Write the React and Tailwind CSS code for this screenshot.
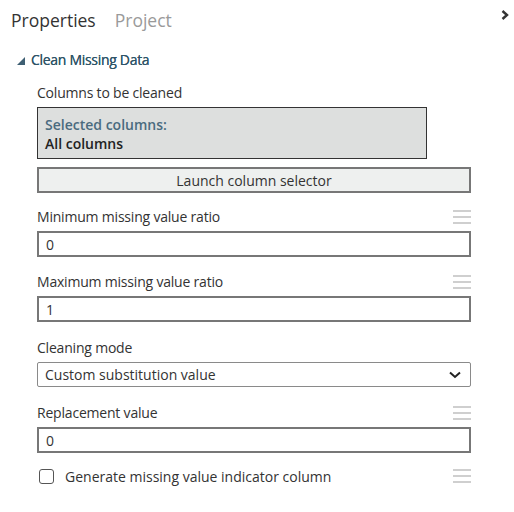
function Grip() {
  return (
    <svg viewBox="0 0 18 14" className="h-[14px] w-[18px]" aria-hidden="true">
      <rect x="0" y="0" width="18" height="2" fill="#cfcfcf" />
      <rect x="0" y="6" width="18" height="2" fill="#cfcfcf" />
      <rect x="0" y="12" width="18" height="2" fill="#cfcfcf" />
    </svg>
  )
}

function FieldLabel({ children, grip = true }) {
  return (
    <div className="flex h-[20px] items-center justify-between">
      <span className="text-[14px] leading-[20px] tracking-[-0.2px] text-[#333]">{children}</span>
      {grip && <Grip />}
    </div>
  )
}

function TextInput({ value }) {
  return (
    <div className="mt-[4px] flex h-[26px] items-center border-2 border-[#777] bg-white px-[7px] text-[14px] text-[#333]">
      {value}
    </div>
  )
}

export default function App() {
  return (
    <div
      className="h-[512px] w-[514px] bg-white text-[#333]"
      style={{ fontFamily: '"Open Sans", "Noto Sans", sans-serif' }}
    >
      <header className="flex h-[40px] items-center justify-between pl-[11px] pr-[5px]">
        <div className="flex items-center gap-[19px] text-[17.5px] leading-[40px]">
          <span className="text-[#333]">Properties</span>
          <span className="text-[#9a9a9a]">Project</span>
        </div>
        <svg viewBox="0 0 8 10" className="mb-[10px] h-[10px] w-[8px]" aria-hidden="true">
          <path d="M1.5 1 L6 5 L1.5 9" fill="none" stroke="#333" strokeWidth="2.4" />
        </svg>
      </header>

      <div className="mt-[10px] flex h-[20px] items-center gap-[6px] pl-[17px]">
        <svg viewBox="0 0 8 8" className="mt-[1px] h-[8px] w-[8px]" aria-hidden="true">
          <path d="M8 0 L8 8 L0 8 Z" fill="#3e5f73" />
        </svg>
        <span className="text-[14px] leading-[20px] tracking-[-0.3px] text-[#2f5468] [text-shadow:0_0_0.4px_#2f5468]">
          Clean Missing Data
        </span>
      </div>

      <div className="ml-[37px] w-[434px]">
        <div className="mt-[13px]">
          <FieldLabel grip={false}>Columns to be cleaned</FieldLabel>
        </div>
        <div className="mt-[4px] h-[52px] w-[390px] border border-[#333] bg-[#dddfde] px-[7px] pt-[7px] text-[14px] font-semibold leading-[19px]">
          <div className="text-[#4a6b7e]">Selected columns:</div>
          <div className="text-[#222]">All columns</div>
        </div>
        <button
          type="button"
          className="mt-[8px] flex h-[26px] w-full items-center justify-center border-2 border-[#777] bg-[#eef0ef] text-[14px] text-[#333]"
        >
          Launch column selector
        </button>

        <div className="mt-[14px]">
          <FieldLabel>Minimum missing value ratio</FieldLabel>
          <TextInput value="0" />
        </div>

        <div className="mt-[15px]">
          <FieldLabel>Maximum missing value ratio</FieldLabel>
          <TextInput value="1" />
        </div>

        <div className="mt-[16px]">
          <FieldLabel grip={false}>Cleaning mode</FieldLabel>
          <div className="mt-[4px] flex h-[25px] items-center justify-between rounded-[2px] border border-[#8a8a8a] bg-white pl-[7px] pr-[9px] text-[14px] text-[#333]">
            <span>Custom substitution value</span>
            <svg viewBox="0 0 12 8" className="h-[8px] w-[12px]" aria-hidden="true">
              <path d="M1 1.5 L6 6 L11 1.5" fill="none" stroke="#222" strokeWidth="2" />
            </svg>
          </div>
        </div>

        <div className="mt-[16px]">
          <FieldLabel>Replacement value</FieldLabel>
          <TextInput value="0" />
        </div>

        <div className="mt-[13px] flex h-[20px] items-center justify-between">
          <label className="flex items-center gap-[11px] pl-[2px] text-[14px] text-[#333]">
            <span className="h-[15px] w-[15px] rounded-[3px] border border-[#555] bg-white" />
            Generate missing value indicator column
          </label>
          <Grip />
        </div>
      </div>
    </div>
  )
}
